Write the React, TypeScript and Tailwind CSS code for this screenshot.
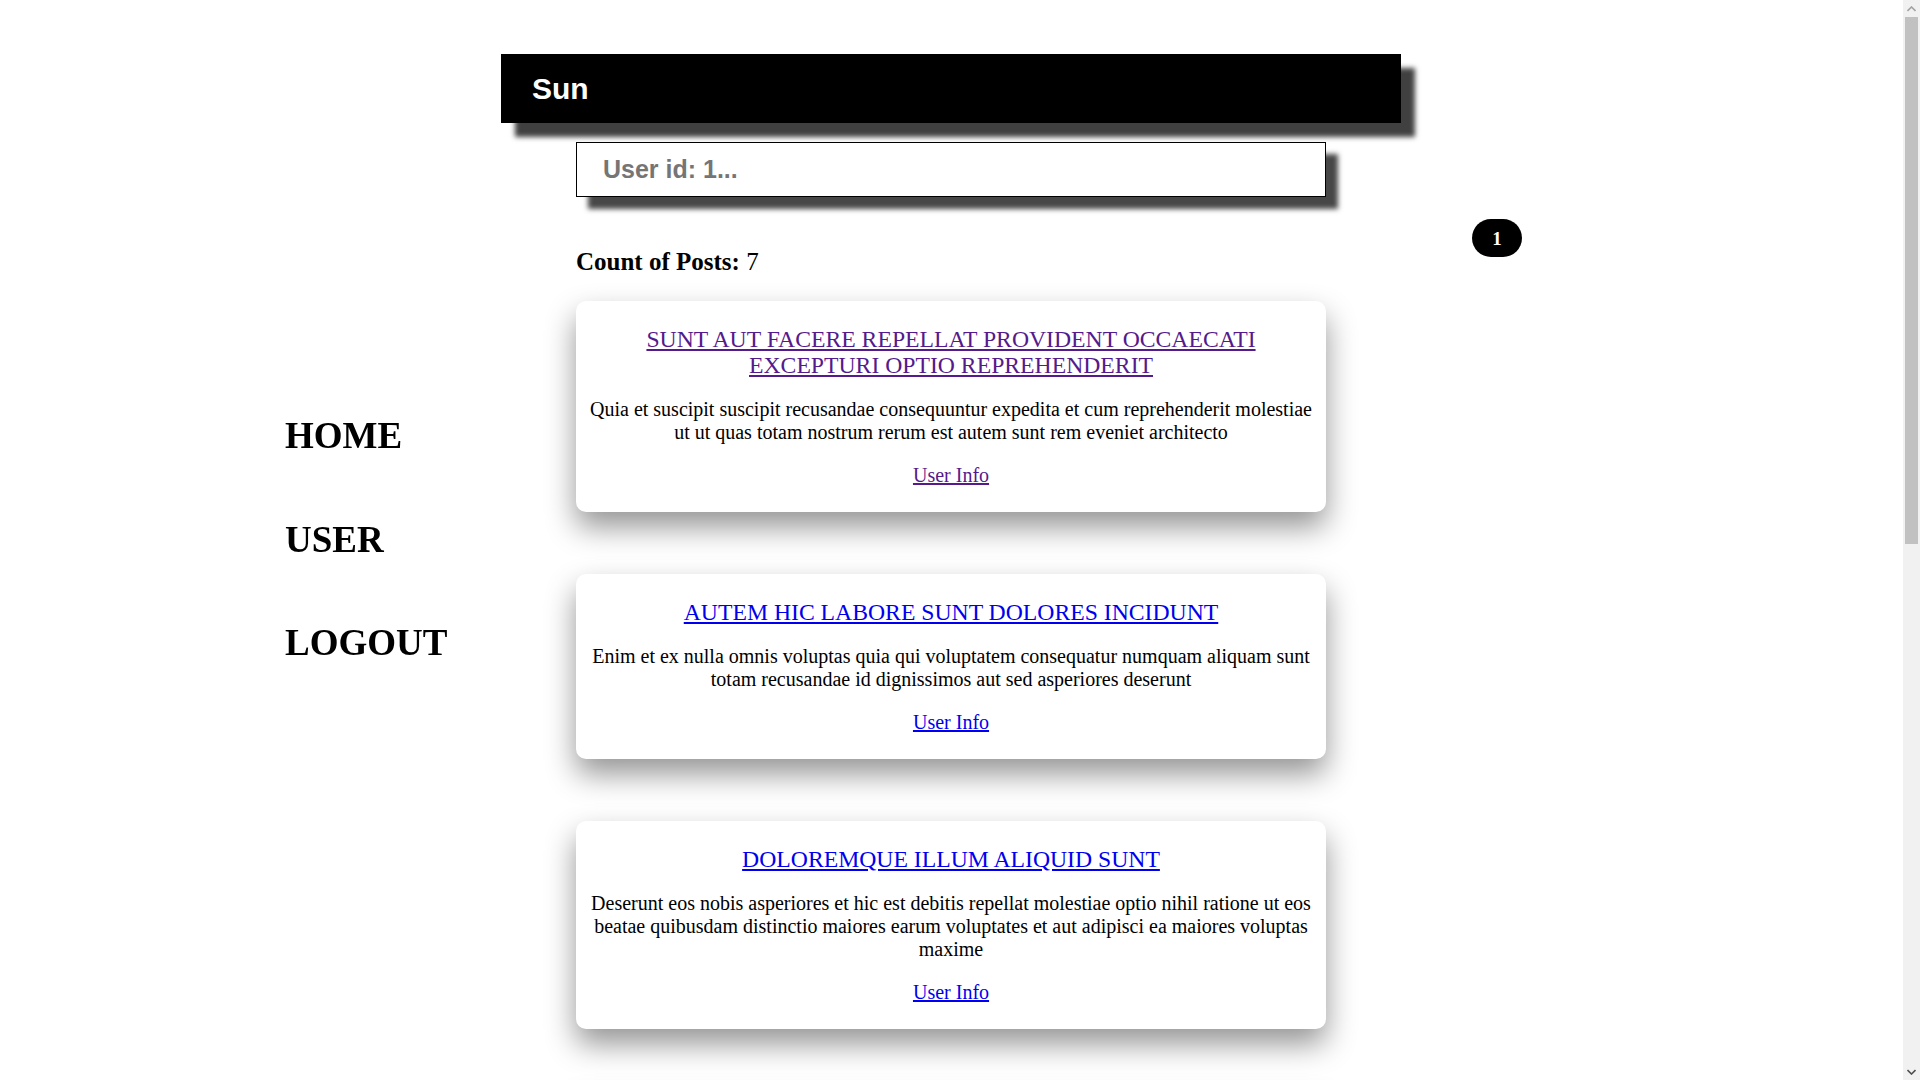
import { useState } from "react";

interface Post {
  id: number;
  title: string;
  body: string;
  visited?: boolean;
}

const posts: Post[] = [
  {
    id: 1,
    title: "sunt aut facere repellat provident occaecati excepturi optio reprehenderit",
    body: "Quia et suscipit suscipit recusandae consequuntur expedita et cum reprehenderit molestiae ut ut quas totam nostrum rerum est autem sunt rem eveniet architecto",
    visited: true,
  },
  {
    id: 16,
    title: "autem hic labore sunt dolores incidunt",
    body: "Enim et ex nulla omnis voluptas quia qui voluptatem consequatur numquam aliquam sunt totam recusandae id dignissimos aut sed asperiores deserunt",
  },
  {
    id: 19,
    title: "doloremque illum aliquid sunt",
    body: "Deserunt eos nobis asperiores et hic est debitis repellat molestiae optio nihil ratione ut eos beatae quibusdam distinctio maiores earum voluptates et aut adipisci ea maiores voluptas maxime",
  },
  {
    id: 49,
    title: "laborum non sunt aut ut assumenda perspiciatis voluptas",
    body: "Inventore ab sint natus fugit id nulla sequi architecto nihil quaerat eos tenetur in in eum veritatis non quibusdam officiis aspernatur cumque aut commodi aut",
  },
  {
    id: 63,
    title: "sunt dolores aut doloribus",
    body: "Dolore accusantium facere ipsa quaerat numquam expedita sunt est sed consequatur id repellendus totam qui inventore iusto",
  },
  {
    id: 78,
    title: "consequatur id enim sunt et et",
    body: "Voluptatibus ex esse sint explicabo est aliquid cumque adipisci fuga repellat labore molestiae corrupti ex saepe at asperiores et perferendis natus id esse incidunt pariatur",
  },
  {
    id: 92,
    title: "sunt aut quae laboriosam sit ut impedit",
    body: "Et ut qui mollitia nostrum quo sunt dolorem sapiente aut est voluptatem nihil dolor",
  },
];

function PostCard({ post }: { post: Post }) {
  const linkColor = post.visited ? "text-[#551a8b]" : "text-[#0000ee]";
  return (
    <div className="flex flex-col gap-5 rounded-[10px] bg-white px-3 py-[25px] text-center shadow-[0_15px_30px_rgba(0,0,0,0.42)]">
      <a href="#" className={`text-[23.7px] leading-[26px] uppercase underline ${linkColor}`}>
        {post.title}
      </a>
      <p className="text-[20px] leading-[23px]">{post.body}</p>
      <a href="#" className={`text-[20px] leading-[23px] underline ${linkColor}`}>
        User Info
      </a>
    </div>
  );
}

// browser scrollbar as it shows in the screenshot
function Scrollbar() {
  return (
    <div className="flex h-full w-[17px] shrink-0 flex-col bg-[#f1f1f1]">
      <div className="flex h-[17px] items-center justify-center">
        <svg width="9" height="6" viewBox="0 0 9 6">
          <path d="M0.5 5 L4.5 1 L8.5 5" fill="none" stroke="#a3a3a3" strokeWidth="1.6" />
        </svg>
      </div>
      <div className="mx-[2px] h-[527px] bg-[#c1c1c1]" />
      <div className="flex-1" />
      <div className="flex h-[17px] items-center justify-center">
        <svg width="9" height="6" viewBox="0 0 9 6">
          <path d="M0.5 1 L4.5 5 L8.5 1" fill="none" stroke="#505050" strokeWidth="1.6" />
        </svg>
      </div>
    </div>
  );
}

export default function App() {
  const [search, setSearch] = useState("Sun");
  const [userId, setUserId] = useState("");

  return (
    <div className="flex h-screen w-full overflow-hidden bg-white font-['Liberation_Serif',serif] text-black">
      <div className="h-full min-w-0 flex-1 overflow-y-auto [scrollbar-width:none]">
        <div className="flex w-full">
          <aside className="sticky top-0 flex h-screen w-[501px] shrink-0 flex-col justify-center gap-[61px] self-start pl-[285px]">
            <a href="#" className="text-[37px] leading-[42.5px] font-bold">HOME</a>
            <a href="#" className="text-[37px] leading-[42.5px] font-bold">USER</a>
            <a href="#" className="text-[37px] leading-[42.5px] font-bold">LOGOUT</a>
          </aside>

          <main className="w-[900px] shrink-0 pt-[54px] pb-[70px]">
            <div className="h-[69px] bg-black shadow-[14px_14px_5px_rgba(0,0,0,0.75)]">
              <input
                value={search}
                onChange={(e) => setSearch(e.target.value)}
                className="h-full w-full bg-transparent pl-[31px] font-['Liberation_Sans',Arial,sans-serif] text-[30px] font-bold text-white outline-none"
              />
            </div>

            <div className="mx-auto w-[750px]">
              <input
                value={userId}
                onChange={(e) => setUserId(e.target.value)}
                placeholder="User id: 1..."
                className="mt-[19px] h-[55px] w-full border border-black bg-white pl-[26px] font-['Liberation_Sans',Arial,sans-serif] text-[25px] font-bold outline-none shadow-[12px_12px_5px_rgba(0,0,0,0.72)] placeholder:text-[#757575]"
              />

              <div className="mt-[50px] text-[25px] leading-[29px]">
                <span className="font-bold">Count of Posts:</span> {posts.length}
              </div>

              <div className="mt-[25px] flex flex-col gap-[62px]">
                {posts.map((post) => (
                  <PostCard key={post.id} post={post} />
                ))}
              </div>
            </div>
          </main>

          <div className="min-w-0 flex-1 pl-[71px] pt-[219px]">
            <div className="flex h-[38px] w-[50px] items-center justify-center rounded-full bg-black text-[19px] leading-none font-bold text-white">
              1
            </div>
          </div>
        </div>
      </div>
      <Scrollbar />
    </div>
  );
}
